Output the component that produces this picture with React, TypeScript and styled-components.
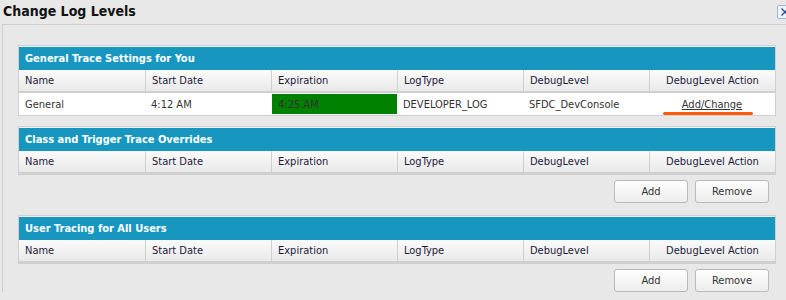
import React from "react";
import styled, { createGlobalStyle } from "styled-components";

const GlobalStyle = createGlobalStyle`
  html, body {
    margin: 0;
    padding: 0;
    background: #e8e8e8;
    overflow: hidden;
  }
  body {
    font-family: "DejaVu Sans Condensed", "DejaVu Sans", sans-serif;
    font-size: 11px;
    color: #222;
  }
`;

const columns = ["Name", "Start Date", "Expiration", "LogType", "DebugLevel", "DebugLevel Action"];

const Page = styled.div`
  width: 786px;
  height: 300px;
  overflow: hidden;
`;

const TitleBar = styled.div`
  height: 24px;
  display: flex;
  align-items: flex-start;
  justify-content: space-between;
  padding-left: 3px;
  box-sizing: border-box;
`;

const Title = styled.h1`
  margin: 3px 0 0;
  font-size: 14px;
  font-weight: bold;
  color: #111;
`;

const CloseButton = styled.button`
  margin: 5px -6px 0 0;
  width: 15px;
  height: 14px;
  padding: 0;
  border: 1px solid #9ab8dd;
  border-radius: 2px;
  background: #eef4fc;
  display: flex;
  align-items: center;
  justify-content: center;
`;

const Panel = styled.div`
  margin-left: 2px;
  border-left: 1px solid #d2cccc;
  border-top: 1px solid #d2cccc;
  padding: 20px 10px 0 15px;
  display: flex;
  flex-direction: column;
`;

const Section = styled.section<{ $gap: number }>`
  margin-top: ${(p) => p.$gap}px;
  border: 1px solid #cfcfcf;
  background: #f2f2f2;
`;

const SectionHeader = styled.div`
  margin-top: 1px;
  height: 23px;
  background: #1797c0;
  color: #fff;
  font-weight: bold;
  font-size: 11px;
  display: flex;
  align-items: center;
  padding-left: 6px;
`;

const Grid = styled.div`
  display: grid;
  grid-template-columns: repeat(6, 1fr);
`;

const HeadCell = styled.div<{ $center?: boolean }>`
  height: 23px;
  box-sizing: border-box;
  display: flex;
  align-items: center;
  justify-content: ${(p) => (p.$center ? "center" : "flex-start")};
  padding-left: ${(p) => (p.$center ? "0" : "6px")};
  background: linear-gradient(#fbfbfb, #e9e9e9);
  border-bottom: 2px solid #cfcfcf;
  border-left: 1px solid #cfcfcf;
  color: #1d1a3a;
  &:first-child {
    border-left: none;
  }
`;

const Cell = styled.div<{ $center?: boolean; $highlight?: boolean }>`
  position: relative;
  height: 22px;
  box-sizing: border-box;
  display: flex;
  align-items: center;
  justify-content: ${(p) => (p.$center ? "center" : "flex-start")};
  padding-left: ${(p) => (p.$center ? "0" : "6px")};
  background: #fff;
  color: #333;
  ${(p) =>
    p.$highlight &&
    `
    background: #008000;
    color: #333;
    border: 1px solid #fff;
    border-right-width: 0;
    padding-left: 6px;
  `}
`;

const ActionLink = styled.a`
  color: #333;
  text-decoration: underline;
  cursor: pointer;
`;

const Marker = styled.span`
  position: absolute;
  left: 14px;
  right: 22px;
  bottom: 0px;
  height: 3px;
  border-radius: 2px;
  background: #ff5a0a;
`;

const ButtonRow = styled.div`
  display: flex;
  justify-content: flex-end;
  gap: 7px;
  padding: 5px 7px 0 0;
`;

const Button = styled.button`
  width: 74px;
  height: 23px;
  border: 1px solid #b9b9b9;
  border-radius: 3px;
  background: linear-gradient(#ffffff, #ededed);
  font-family: inherit;
  font-size: 11px;
  color: #333;
  padding: 0;
`;

const HeaderRow = () => (
  <>
    {columns.map((c, i) => (
      <HeadCell key={c} $center={i === columns.length - 1}>
        {c}
      </HeadCell>
    ))}
  </>
);

const Actions = () => (
  <ButtonRow>
    <Button>Add</Button>
    <Button>Remove</Button>
  </ButtonRow>
);

export default function App() {
  return (
    <Page>
      <GlobalStyle />
      <TitleBar>
        <Title>Change Log Levels</Title>
        <CloseButton aria-label="Close">
          <svg width="10" height="10" viewBox="0 0 10 10">
            <path d="M1.5 1.5 L8.5 8.5 M8.5 1.5 L1.5 8.5" stroke="#2b4f9e" strokeWidth="1.4" />
          </svg>
        </CloseButton>
      </TitleBar>
      <Panel>
        <Section $gap={0}>
          <SectionHeader>General Trace Settings for You</SectionHeader>
          <Grid>
            <HeaderRow />
            <Cell>General</Cell>
            <Cell>4:12 AM</Cell>
            <Cell $highlight>4:25 AM</Cell>
            <Cell>DEVELOPER_LOG</Cell>
            <Cell>SFDC_DevConsole</Cell>
            <Cell $center>
              <ActionLink>Add/Change</ActionLink>
              <Marker />
            </Cell>
          </Grid>
        </Section>

        <Section $gap={10}>
          <SectionHeader>Class and Trigger Trace Overrides</SectionHeader>
          <Grid>
            <HeaderRow />
          </Grid>
        </Section>
        <Actions />

        <Section $gap={12}>
          <SectionHeader>User Tracing for All Users</SectionHeader>
          <Grid>
            <HeaderRow />
          </Grid>
        </Section>
        <Actions />
      </Panel>
    </Page>
  );
}
